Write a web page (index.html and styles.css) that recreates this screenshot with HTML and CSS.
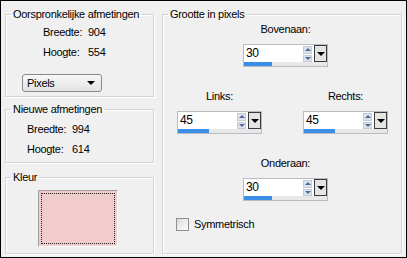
FILE: index.html
```html
<!DOCTYPE html>
<html lang="nl">
<head>
    <meta charset="UTF-8">
    <title>Rand toevoegen</title>
    <link rel="stylesheet" href="styles.css">
</head>
<body>
    <div class="dialog">
        <div class="col-left">
            <fieldset class="group g-orig">
                <legend>Oorspronkelijke afmetingen</legend>
                <div class="dims">
                    <span>Breedte:</span><span>904</span>
                    <span>Hoogte:</span><span>554</span>
                </div>
                <div class="select">Pixels<span class="caret"></span></div>
            </fieldset>

            <fieldset class="group g-new">
                <legend>Nieuwe afmetingen</legend>
                <div class="dims">
                    <span>Breedte:</span><span>994</span>
                    <span>Hoogte:</span><span>614</span>
                </div>
            </fieldset>

            <fieldset class="group g-color">
                <legend>Kleur</legend>
                <div class="swatch"></div>
            </fieldset>
        </div>

        <fieldset class="group g-size">
            <legend>Grootte in pixels</legend>

            <div class="field f-top">
                <label>Bovenaan:</label>
                <div class="spin">
                    <div class="spin-row">
                        <span class="spin-val">30</span>
                        <span class="arrows"><i class="up"></i><i class="down"></i></span>
                        <span class="drop"></span>
                    </div>
                    <div class="bar"><div class="fill" style="width: 28px"></div></div>
                </div>
            </div>

            <div class="pair">
                <div class="field">
                    <label>Links:</label>
                    <div class="spin">
                        <div class="spin-row">
                            <span class="spin-val">45</span>
                            <span class="arrows"><i class="up"></i><i class="down"></i></span>
                            <span class="drop"></span>
                        </div>
                        <div class="bar"><div class="fill" style="width: 31px"></div></div>
                    </div>
                </div>
                <div class="field">
                    <label>Rechts:</label>
                    <div class="spin">
                        <div class="spin-row">
                            <span class="spin-val">45</span>
                            <span class="arrows"><i class="up"></i><i class="down"></i></span>
                            <span class="drop"></span>
                        </div>
                        <div class="bar"><div class="fill" style="width: 31px"></div></div>
                    </div>
                </div>
            </div>

            <div class="field f-top">
                <label>Onderaan:</label>
                <div class="spin">
                    <div class="spin-row">
                        <span class="spin-val">30</span>
                        <span class="arrows"><i class="up"></i><i class="down"></i></span>
                        <span class="drop"></span>
                    </div>
                    <div class="bar"><div class="fill" style="width: 28px"></div></div>
                </div>
            </div>

            <div class="check"><span class="box"></span>Symmetrisch</div>
        </fieldset>
    </div>
</body>
</html>
```

FILE: styles.css
```css
body {
    margin: 0;
    font-family: "Liberation Sans", Arial, sans-serif;
    font-size: 11px;
    letter-spacing: -0.3px;
    color: #000;
}
.dialog {
    width: 407px;
    height: 258px;
    box-sizing: border-box;
    border: 1px solid #000;
    background-color: #f0f0f0;
    padding: 7px 0 0 4px;
    display: flex;
    gap: 8px;
}
.col-left {
    width: 149px;
    display: flex;
    flex-direction: column;
}

/* group boxes */
.group {
    margin: 0;
    padding: 0;
    min-width: 0;
    box-sizing: border-box;
    border: 1px solid #d0d5d9;
    box-shadow: 1px 1px 0 #fff, inset 1px 1px 0 #fff;
}
.group legend {
    padding: 0 2px;
    margin-left: 5px;
    line-height: 13px;
}
.g-orig {
    height: 89px;
}
.g-new {
    height: 60px;
    margin-top: 6px;
}
.g-color {
    height: 83px;
    margin-top: 8px;
}
.g-size {
    width: 240px;
    height: 246px;
}

/* label / value pairs */
.dims {
    display: grid;
    grid-template-columns: 45px auto;
    line-height: 20px;
    padding: 1px 0 0 37px;
}
.g-new .dims {
    padding: 3px 0 0 21px;
}

/* dropdown */
.select {
    width: 80px;
    height: 18px;
    box-sizing: border-box;
    margin: 12px 0 0 16px;
    padding: 0 0 0 4px;
    border: 1px solid #8a8a8a;
    border-radius: 3px;
    background: linear-gradient(#f7f7f7, #e3e3e3);
    line-height: 16px;
    display: flex;
    justify-content: space-between;
    align-items: center;
}
.caret {
    width: 0;
    height: 0;
    margin-right: 6px;
    border-left: 4px solid transparent;
    border-right: 4px solid transparent;
    border-top: 4px solid #000;
}

/* colour swatch */
.swatch {
    width: 80px;
    height: 57px;
    box-sizing: border-box;
    margin: 6px 0 0 32px;
    background-color: #f0cccc;
    border-left: 1px solid #a0a0a0;
    border-top: 1px solid #a0a0a0;
    border-right: 1px solid #fff;
    border-bottom: 1px solid #fff;
    outline: 1px dotted #222;
    outline-offset: -4px;
}

/* size fields */
.field {
    width: 85px;
    display: flex;
    flex-direction: column;
    align-items: center;
}
.field label {
    line-height: 13px;
    margin-bottom: 8px;
}
.f-top {
    margin: 23px 0 0 80px;
}
.g-size .f-top:first-of-type {
    margin-top: 2px;
}
.pair {
    display: flex;
    gap: 41px;
    margin: 23px 0 0 14px;
}

/* spinner */
.spin {
    width: 85px;
    height: 23px;
    box-sizing: border-box;
    border: 1px solid #b5bcc4;
    background-color: #fff;
    display: flex;
    flex-direction: column;
}
.spin-row {
    flex: 1;
    display: flex;
}
.spin-val {
    flex: 1;
    padding-left: 2px;
    font-size: 12px;
    line-height: 17px;
}
.arrows {
    width: 9px;
    margin-right: 2px;
    display: flex;
    flex-direction: column;
    gap: 1px;
    padding-top: 1px;
}
.arrows i {
    flex: 1;
    background-color: #dde3ec;
    border: 1px solid #c3cbd8;
    display: flex;
    align-items: center;
    justify-content: center;
}
.arrows i::after {
    content: "";
    width: 0;
    height: 0;
    border-left: 3px solid transparent;
    border-right: 3px solid transparent;
}
.arrows .up::after {
    border-bottom: 3px solid #4d6a9c;
}
.arrows .down::after {
    border-top: 3px solid #4d6a9c;
}
.drop {
    width: 13px;
    box-sizing: border-box;
    border: 1px solid #3a3a3a;
    background-color: #e4e4e4;
    display: flex;
    align-items: center;
    justify-content: center;
}
.drop::after {
    content: "";
    width: 0;
    height: 0;
    border-left: 4px solid transparent;
    border-right: 4px solid transparent;
    border-top: 4px solid #000;
}
.bar {
    height: 4px;
    background-color: #e8e8e8;
}
.fill {
    height: 100%;
    background-color: #3a8ee6;
}

/* checkbox */
.check {
    display: flex;
    align-items: center;
    gap: 5px;
    margin: 17px 0 0 13px;
    line-height: 13px;
}
.check .box {
    width: 13px;
    height: 13px;
    box-sizing: border-box;
    border: 1px solid #8e8f8f;
    background: linear-gradient(135deg, #dcdcdc, #fdfdfd);
}
```
